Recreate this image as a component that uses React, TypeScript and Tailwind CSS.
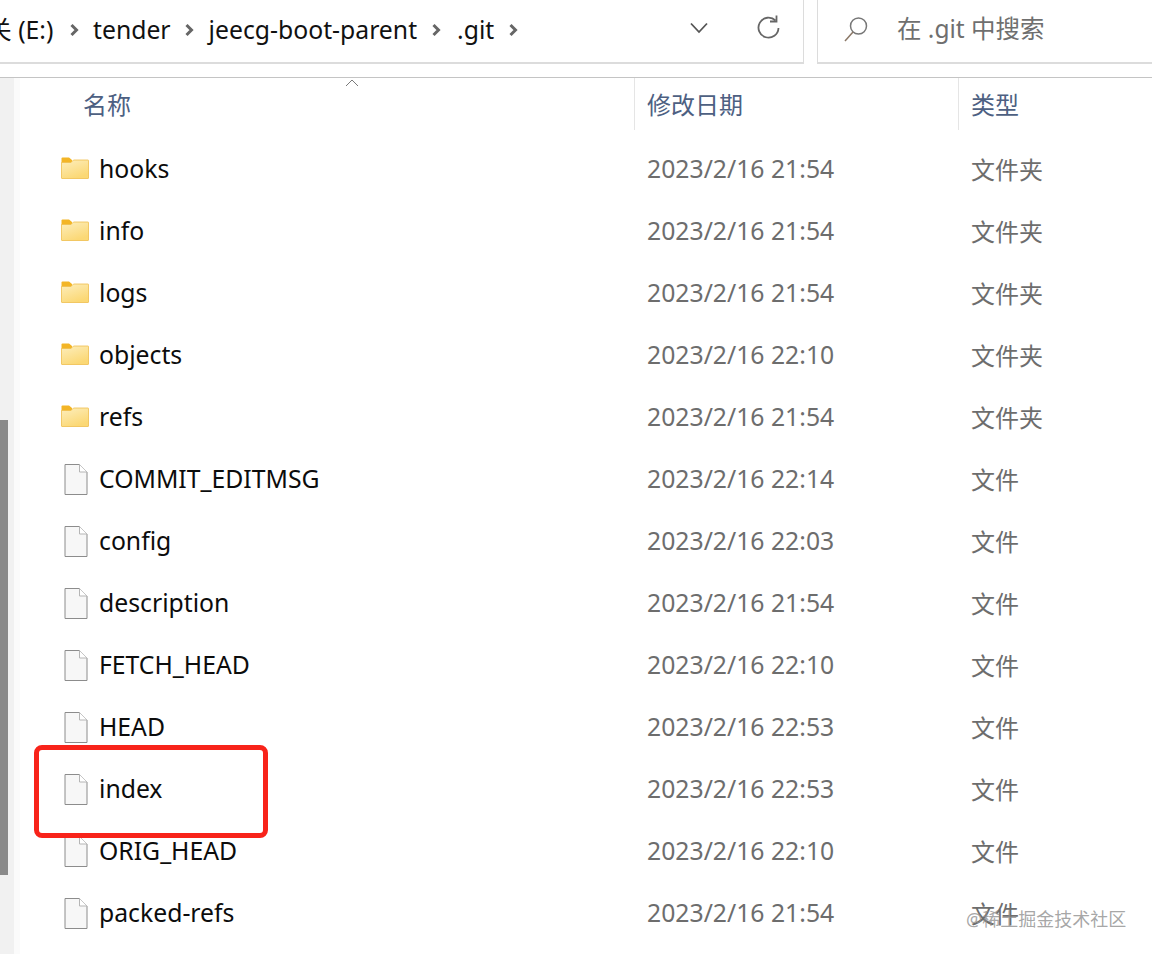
const font = '"Noto Sans", "Noto Sans CJK SC", sans-serif';

const rows: [string, string, boolean][] = [
  ["hooks", "2023/2/16 21:54", true],
  ["info", "2023/2/16 21:54", true],
  ["logs", "2023/2/16 21:54", true],
  ["objects", "2023/2/16 22:10", true],
  ["refs", "2023/2/16 21:54", true],
  ["COMMIT_EDITMSG", "2023/2/16 22:14", false],
  ["config", "2023/2/16 22:03", false],
  ["description", "2023/2/16 21:54", false],
  ["FETCH_HEAD", "2023/2/16 22:10", false],
  ["HEAD", "2023/2/16 22:53", false],
  ["index", "2023/2/16 22:53", false],
  ["ORIG_HEAD", "2023/2/16 22:10", false],
  ["packed-refs", "2023/2/16 21:54", false],
];

function Chevron() {
  return (
    <svg width="9" height="14" viewBox="0 0 9 14" className="shrink-0 block">
      <path d="M1.5 2 L6.5 7 L1.5 12" fill="none" stroke="#666" strokeWidth="3" />
    </svg>
  );
}

function FolderIcon() {
  return (
    <svg width="28" height="22" viewBox="0 0 28 22">
      <defs>
        <linearGradient id="fg" x1="0" y1="0" x2="0.5" y2="1">
          <stop offset="0" stopColor="#fdeebd" />
          <stop offset="1" stopColor="#fbd875" />
        </linearGradient>
      </defs>
      <path d="M0.5 1.5 Q0.5 .5 1.5 .5 H8 L11 3 V6 H0.5 Z" fill="#f3b526" />
      <path d="M0.5 5.5 L10 5.5 L12.5 3 H27 Q27.5 3 27.5 3.5 V21 Q27.5 21.5 27 21.5 H1 Q0.5 21.5 0.5 21 Z" fill="url(#fg)" stroke="#efbe4d" strokeWidth="0.8" />
    </svg>
  );
}

function FileIcon() {
  return (
    <svg width="24" height="31" viewBox="0 0 24 31">
      <path d="M1 .5 H15.5 L23 8 V30.5 H1 Z" fill="#f7f7f7" stroke="#8c8c8c" strokeWidth="1" />
      <path d="M15.5 .5 V8 H23" fill="#fff" stroke="#b5b5b5" strokeWidth="1" />
    </svg>
  );
}

export default function App() {
  return (
    <div className="relative w-[1152px] h-[954px] overflow-hidden bg-white" style={{ fontFamily: font }}>
      <div className="flex h-[78px] border-b border-[#c4c4c4]">
        <div className="w-[804px] h-[64px] shrink-0 border-r border-b-2 border-[#dcdcdc] flex items-center pr-[23px] overflow-hidden">
          <div className="flex items-center text-[24.75px] text-[#111] -ml-[13px] -mt-[3px]">
            <span className="w-[83px] whitespace-nowrap">关 (E:)</span>
            <Chevron />
            <span className="ml-[14px]">tender</span>
            <span className="ml-[14px]"><Chevron /></span>
            <span className="ml-[15px]">jeecg-boot-parent</span>
            <span className="ml-[15px]"><Chevron /></span>
            <span className="ml-[16px]">.git</span>
            <span className="ml-[15px]"><Chevron /></span>
          </div>
          <div className="ml-auto flex items-center gap-[47px] -mt-[6px]">
            <svg width="20" height="12" viewBox="0 0 20 12">
              <path d="M2 1.5 L10 10 L18 1.5" fill="none" stroke="#555" strokeWidth="1.8" />
            </svg>
            <svg width="24" height="26" viewBox="0 0 24 26">
              <path d="M19.5 5.5 A10 10 0 1 0 22.5 13" fill="none" stroke="#666" strokeWidth="1.8" />
              <path d="M20.5 0.5 V6.5 H14" fill="none" stroke="#666" strokeWidth="1.8" />
            </svg>
          </div>
        </div>
        <div className="ml-[13px] flex-1 h-[64px] border-l border-b-2 border-[#dcdcdc] flex items-center pl-[26px] text-[#6f6f6f] text-[24.5px]">
          <svg width="24" height="25" viewBox="0 0 24 25" className="-mt-[4px]">
            <circle cx="14.5" cy="9" r="8" fill="none" stroke="#777" strokeWidth="1.5" />
            <path d="M9 15 L1 24" stroke="#8a7766" strokeWidth="1.5" />
          </svg>
          <span className="ml-[29px] -mt-[3px]">在 .git 中搜索</span>
        </div>
      </div>

      <div className="flex">
        <div className="w-[14px] h-[876px] bg-[#f1f1f1] shrink-0" />
        <div className="w-[6px] h-[876px] bg-[#fbfbfb] shrink-0" />
        <div className="flex-1">
          <div className="grid grid-cols-[614px_324px_1fr] h-[60px] text-[24px] text-[#4d6082]">
            <div className="pl-[63px] pt-[9px]">名称</div>
            <div className="h-[52px] border-l border-[#e5e5e5] pl-[12px] pt-[9px]">修改日期</div>
            <div className="h-[52px] border-l border-[#e5e5e5] pl-[12px] pt-[9px]">类型</div>
          </div>
          {rows.map(([name, date, isDir]) => (
            <div key={name} className="grid grid-cols-[614px_324px_1fr] h-[62px] items-center text-[24.75px]">
              <div className="flex items-center pl-[40px] text-[#0c0c0c]">
                <div className="w-[39px] flex pl-[1px]">
                  {isDir ? <div className="-mt-[3px]"><FolderIcon /></div> : <div className="pl-[3px]"><FileIcon /></div>}
                </div>
                <span>{name}</span>
              </div>
              <div className="pl-[13px] text-[#6d6d6d]">{date}</div>
              <div className="pl-[13px] text-[#6d6d6d] text-[24px] pt-[1px]">{isDir ? "文件夹" : "文件"}</div>
            </div>
          ))}
        </div>
      </div>

      <div className="absolute left-0 top-[420px] w-[8px] h-[455px] bg-[#8a8a8a]" />
      <svg className="absolute left-[345px] top-[78px]" width="14" height="9" viewBox="0 0 14 9">
        <path d="M1 8 L7 2 L13 8" fill="none" stroke="#7a7a7a" strokeWidth="1" />
      </svg>
      <div className="absolute left-[34px] top-[745px] w-[234px] h-[93px] rounded-[8px] border-[5px] border-[#f8231a]" />
      <div className="absolute left-[966px] top-[906px] text-[18px] text-[#8f8f8f]/80 whitespace-nowrap">@稀土掘金技术社区</div>
    </div>
  );
}
